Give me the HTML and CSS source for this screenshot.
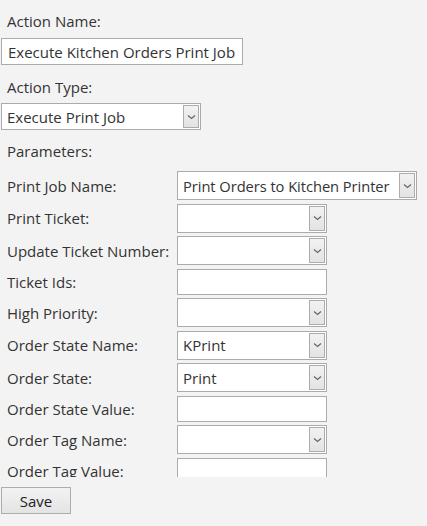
FILE: index.html
```html
<!DOCTYPE html>
<html>
<head>
<meta charset="utf-8">
<link rel="stylesheet" href="styles.css">
</head>
<body>
<div class="page">
  <div class="label top-label name-label">Action Name:</div>
  <div class="field text wide">Execute Kitchen Orders Print Job</div>
  <div class="label top-label type-label">Action Type:</div>
  <div class="field select mid"><span class="val">Execute Print Job</span><span class="btn"><svg width="9" height="6" viewBox="0 0 9 6"><path d="M1 1.5 L4.5 4.5 L8 1.5" fill="none" stroke="#666" stroke-width="1.2"/></svg></span></div>
  <div class="label top-label params-label">Parameters:</div>
  <div class="scroll">
    <div class="grid">
      <div class="label">Print Job Name:</div>
      <div class="field select long"><span class="val">Print Orders to Kitchen Printer</span><span class="btn"><svg width="9" height="6" viewBox="0 0 9 6"><path d="M1 1.5 L4.5 4.5 L8 1.5" fill="none" stroke="#666" stroke-width="1.2"/></svg></span></div>

      <div class="label">Print Ticket:</div>
      <div class="field select"><span class="val"></span><span class="btn"><svg width="9" height="6" viewBox="0 0 9 6"><path d="M1 1.5 L4.5 4.5 L8 1.5" fill="none" stroke="#666" stroke-width="1.2"/></svg></span></div>

      <div class="label">Update Ticket Number:</div>
      <div class="field select"><span class="val"></span><span class="btn"><svg width="9" height="6" viewBox="0 0 9 6"><path d="M1 1.5 L4.5 4.5 L8 1.5" fill="none" stroke="#666" stroke-width="1.2"/></svg></span></div>

      <div class="label">Ticket Ids:</div>
      <div class="field text"></div>

      <div class="label">High Priority:</div>
      <div class="field select"><span class="val"></span><span class="btn"><svg width="9" height="6" viewBox="0 0 9 6"><path d="M1 1.5 L4.5 4.5 L8 1.5" fill="none" stroke="#666" stroke-width="1.2"/></svg></span></div>

      <div class="label">Order State Name:</div>
      <div class="field select"><span class="val">KPrint</span><span class="btn"><svg width="9" height="6" viewBox="0 0 9 6"><path d="M1 1.5 L4.5 4.5 L8 1.5" fill="none" stroke="#666" stroke-width="1.2"/></svg></span></div>

      <div class="label">Order State:</div>
      <div class="field select"><span class="val">Print</span><span class="btn"><svg width="9" height="6" viewBox="0 0 9 6"><path d="M1 1.5 L4.5 4.5 L8 1.5" fill="none" stroke="#666" stroke-width="1.2"/></svg></span></div>

      <div class="label">Order State Value:</div>
      <div class="field text"></div>

      <div class="label">Order Tag Name:</div>
      <div class="field select"><span class="val"></span><span class="btn"><svg width="9" height="6" viewBox="0 0 9 6"><path d="M1 1.5 L4.5 4.5 L8 1.5" fill="none" stroke="#666" stroke-width="1.2"/></svg></span></div>

      <div class="label">Order Tag Value:</div>
      <div class="field text"></div>

      <div class="label">Tag Ticket:</div>
      <div class="field select"><span class="val"></span><span class="btn"><svg width="9" height="6" viewBox="0 0 9 6"><path d="M1 1.5 L4.5 4.5 L8 1.5" fill="none" stroke="#666" stroke-width="1.2"/></svg></span></div>
    </div>
  </div>
  <div class="actions"><button class="save">Save</button></div>
</div>
</body>
</html>
```
FILE: styles.css
```css
html, body {
  margin: 0;
  padding: 0;
  background: #f3f3f3;
}
body {
  font-family: "Open Sans", "Noto Sans", sans-serif;
  font-size: 15px;
  line-height: 20px;
  color: #333;
}
.page {
  padding: 0 0 0 1px;
}
.label {
  padding-left: 6px;
  white-space: nowrap;
  display: flex;
  align-items: center;
  height: 20px;
}
.name-label {
  margin-top: 11px;
  margin-bottom: 7px;
}
.type-label {
  margin-top: 12px;
  margin-bottom: 6px;
}
.params-label {
  margin-top: 11px;
}
.field {
  box-sizing: border-box;
  background: #fff;
  border: 1px solid #ababab;
  display: flex;
  align-items: center;
  white-space: nowrap;
  overflow: hidden;
}
.field.text {
  height: 26px;
  width: 150px;
  padding-left: 6px;
}
.field.text.wide {
  width: 242px;
  height: 27px;
}
.field.select {
  height: 29px;
  width: 150px;
  padding: 1px 1px 1px 5px;
}
.field.select.mid {
  width: 200px;
  height: 27px;
}
.field.select.long {
  width: 240px;
}
.val {
  flex: 1;
  min-width: 0;
  overflow: hidden;
}
.long .val {
  font-size: 14.7px;
  letter-spacing: -0.05px;
}
.btn {
  box-sizing: border-box;
  flex: 0 0 16px;
  width: 16px;
  align-self: stretch;
  border: 1px solid #acacac;
  background: linear-gradient(#f2f2f2, #e3e3e3);
  display: flex;
  align-items: center;
  justify-content: center;
}
.scroll {
  margin-top: 10px;
  height: 306px;
  overflow: hidden;
}
.grid {
  display: grid;
  grid-template-columns: 176px auto;
  justify-items: start;
  row-gap: 3.5px;
}
.grid .label {
  align-self: center;
}
.actions {
  margin-top: 10px;
}
.save {
  font-family: inherit;
  font-size: 15px;
  line-height: 20px;
  color: #222;
  width: 70px;
  height: 27px;
  border: 1px solid #adadad;
  background: linear-gradient(#f2f2f2, #e4e4e4);
  padding: 0;
  border-radius: 0;
  display: flex;
  align-items: center;
  justify-content: center;
}
```
